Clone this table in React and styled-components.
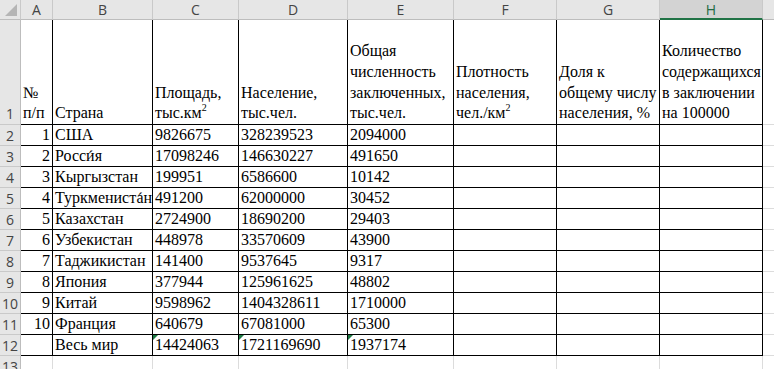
import styled, { createGlobalStyle } from "styled-components";

const GlobalStyle = createGlobalStyle`
  html, body { margin: 0; padding: 0; background: #fff; }
`;

const COLS = ["A", "B", "C", "D", "E", "F", "G", "H"];

const Sheet = styled.div`
  display: grid;
  grid-template-columns: 21px 32px 100px 86px 109px 106px 103px 103px 103px 64px;
  grid-template-rows: 20px 105px repeat(11, 21px) 21px;
  width: 774px;
  height: 369px;
  overflow: hidden;
  background: #fff;
`;

const Corner = styled.div`
  box-sizing: border-box;
  background: #e6e6e6;
  border-right: 1px solid #c9c9c9;
  border-bottom: 1px solid #bdbdbd;
  display: flex;
  align-items: flex-end;
  justify-content: flex-end;
  padding: 0 2px 2px 0;
`;

const ColHead = styled.div`
  box-sizing: border-box;
  background: ${(p) => (p.$active ? "#d3d3d3" : "#e6e6e6")};
  color: ${(p) => (p.$active ? "#1f6b43" : "#444")};
  border-right: 1px solid #c9c9c9;
  border-bottom: ${(p) => (p.$active ? "2px solid #217346" : "1px solid #bdbdbd")};
  font: 14px "Open Sans", "Liberation Sans", sans-serif;
  display: flex;
  align-items: center;
  justify-content: center;
  padding-top: ${(p) => (p.$active ? "1px" : "0")};
`;

const RowHead = styled.div`
  box-sizing: border-box;
  background: #e6e6e6;
  color: #444;
  border-right: 1px solid #bdbdbd;
  border-bottom: 1px solid #c9c9c9;
  font: 14px "Open Sans", "Liberation Sans", sans-serif;
  display: flex;
  align-items: ${(p) => (p.$tall ? "flex-end" : "center")};
  justify-content: center;
  padding-bottom: ${(p) => (p.$tall ? "1px" : "0")};
`;

const Cell = styled.div`
  box-sizing: border-box;
  position: relative;
  border-right: 1px solid ${(p) => (p.$boxed ? "#000" : "#dcdcdc")};
  border-bottom: 1px solid ${(p) => (p.$boxed ? "#000" : "#dcdcdc")};
  display: flex;
  align-items: flex-end;
  justify-content: ${(p) => (p.$right ? "flex-end" : "flex-start")};
  padding: ${(p) => (p.$right ? "0 2px 0 0" : "0 0 0 2px")};
  font-family: "Liberation Serif", "Times New Roman", serif;
  font-size: 16px;
  line-height: ${(p) => (p.$wrap ? "20.7px" : "20px")};
  color: #000;
  white-space: nowrap;
  overflow: hidden;
`;

const Text = styled.span`
  display: block;
  text-align: ${(p) => (p.$right ? "right" : "left")};
`;

const Sup = styled.sup`
  font-size: 10px;
  line-height: 0;
  vertical-align: 7px;
`;

// stress mark over a vowel
const Stress = styled.span`
  position: relative;
  &::after {
    content: "\\00B4";
    position: absolute;
    left: 50%;
    top: 0;
    transform: translateX(-45%);
  }
`;

// green "number stored as text" marker
const Flag = styled.span`
  position: absolute;
  top: 0;
  left: 0;
  width: 0;
  height: 0;
  border-top: 5px solid #1e7a45;
  border-right: 5px solid transparent;
`;

const rows = [
  ["1", "США", "9826675", "328239523", "2094000"],
  ["2", <>Росс<Stress>и</Stress>я</>, "17098246", "146630227", "491650"],
  ["3", "Кыргызстан", "199951", "6586600", "10142"],
  ["4", <>Туркменист<Stress>а</Stress>н</>, "491200", "62000000", "30452"],
  ["5", "Казахстан", "2724900", "18690200", "29403"],
  ["6", "Узбекистан", "448978", "33570609", "43900"],
  ["7", "Таджикистан", "141400", "9537645", "9317"],
  ["8", "Япония", "377944", "125961625", "48802"],
  ["9", "Китай", "9598962", "1404328611", "1710000"],
  ["10", "Франция", "640679", "67081000", "65300"],
  ["", "Весь мир", "14424063", "1721169690", "1937174"],
];

const headers = [
  ["№", "п/п"],
  ["Страна"],
  ["Площадь,", <>тыс.км<Sup>2</Sup></>],
  ["Население,", "тыс.чел."],
  ["Общая", "численность", "заключенных,", "тыс.чел."],
  ["Плотность", "населения,", <>чел./км<Sup>2</Sup></>],
  ["Доля к", "общему числу", "населения, %"],
  ["Количество", "содержащихся", "в заключении", "на 100000"],
];

const Lines = ({ lines }) =>
  lines.map((l, i) => (
    <span key={i}>
      {l}
      {i < lines.length - 1 && <br />}
    </span>
  ));

export default function App() {
  return (
    <>
      <GlobalStyle />
      <Sheet>
        <Corner>
          <svg width="13" height="13" viewBox="0 0 13 13">
            <polygon points="12,0 12,12 0,12" fill="#b5b5b5" />
          </svg>
        </Corner>
        {COLS.map((c) => (
          <ColHead key={c} $active={c === "H"}>
            {c}
          </ColHead>
        ))}
        <ColHead />

        <RowHead $tall>1</RowHead>
        {headers.map((h, i) => (
          <Cell key={i} $boxed $wrap>
            <Text>
              <Lines lines={h} />
            </Text>
          </Cell>
        ))}
        <Cell />

        {rows.map((r, ri) => (
          <Row key={ri} n={ri + 2} data={r} total={ri === rows.length - 1} />
        ))}

        <RowHead>13</RowHead>
        {[...COLS, "I"].map((c) => (
          <Cell key={c} />
        ))}
      </Sheet>
    </>
  );
}

function Row({ n, data, total }) {
  const [num, country, area, pop, prisoners] = data;
  return (
    <>
      <RowHead>{n}</RowHead>
      <Cell $boxed $right>
        <Text $right>{num}</Text>
      </Cell>
      <Cell $boxed>
        <Text>{country}</Text>
      </Cell>
      {[area, pop, prisoners].map((v, i) => (
        <Cell key={i} $boxed>
          {total && <Flag />}
          <Text>{v}</Text>
        </Cell>
      ))}
      <Cell $boxed />
      <Cell $boxed />
      <Cell $boxed />
      <Cell />
    </>
  );
}
